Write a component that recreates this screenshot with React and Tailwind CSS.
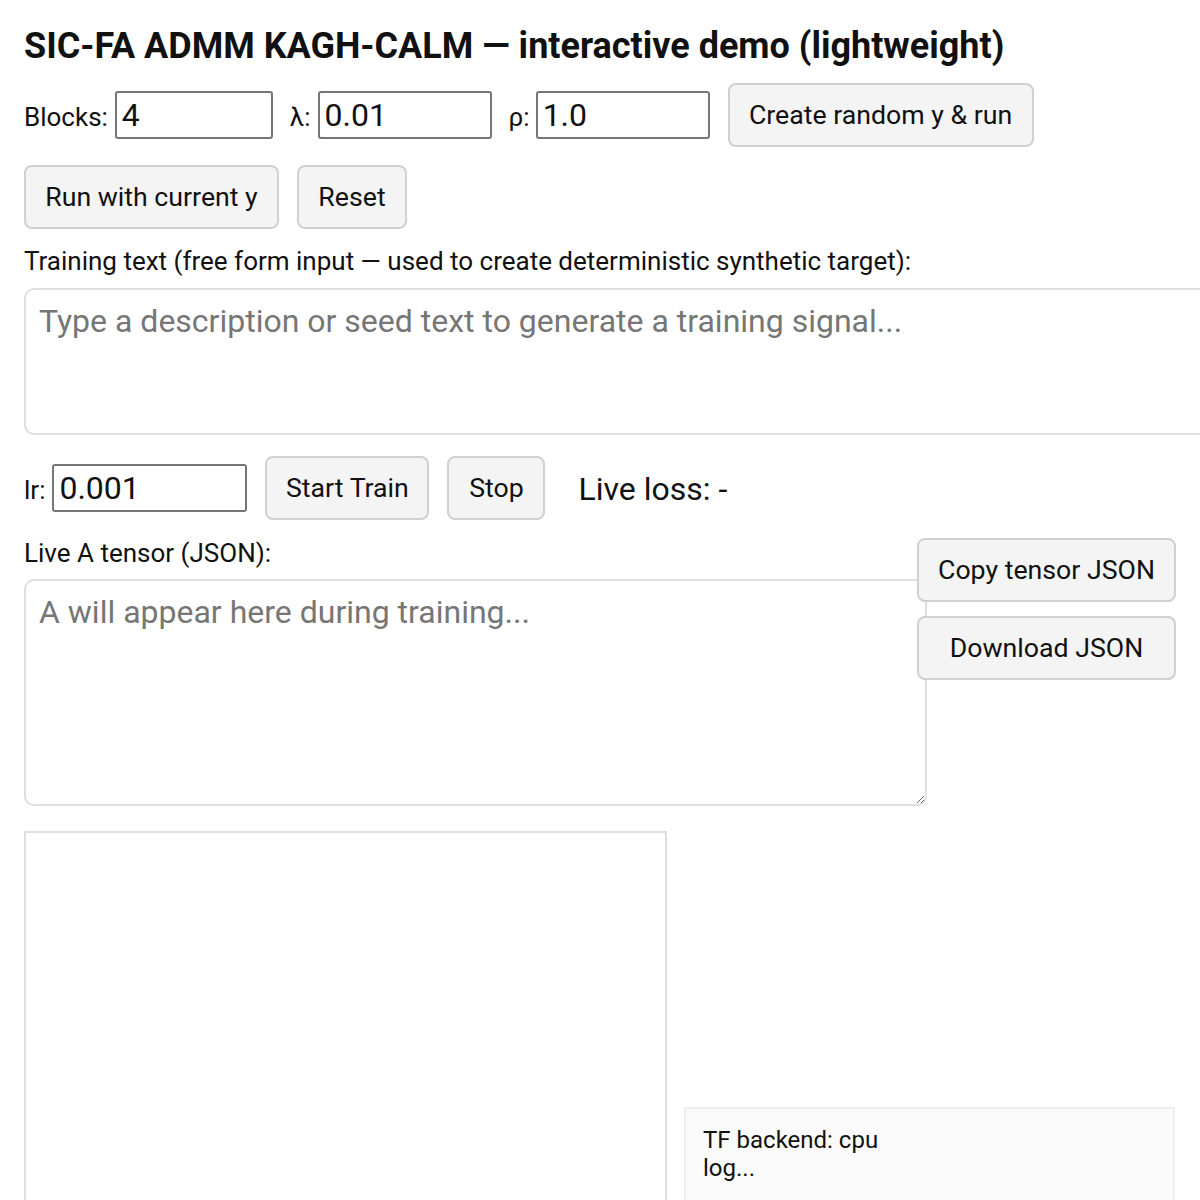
export default function App() {
  const btn =
    "h-[64px] rounded-[8px] border-2 border-[#d0d0d0] bg-[#f4f4f4] text-[26.7px] text-[#111] leading-none shrink-0 whitespace-nowrap";
  const inp =
    "h-[48px] border-2 border-[#767676] rounded-[3px] px-[5px] text-[32px] text-[#111] bg-white outline-none";
  const lbl = "pt-[4px]";
  return (
    <div className="min-h-[1200px] bg-white overflow-hidden font-['Roboto'] text-[#111]">
      <div className="pl-[24px] pt-[26px]">
        <h1 className="text-[36px] font-bold leading-[40px] text-[#111] whitespace-nowrap">
          SIC-FA ADMM KAGH-CALM — interactive demo (lightweight)
        </h1>

        <div className="flex items-center mt-[17px] h-[64px] text-[26px]">
          <span className={lbl}>Blocks:</span>
          <input className={`${inp} w-[158px] ml-[7px]`} defaultValue="4" />
          <span className={`${lbl} ml-[17px]`}>λ:</span>
          <input className={`${inp} w-[174px] ml-[7px]`} defaultValue="0.01" />
          <span className={`${lbl} ml-[17px]`}>ρ:</span>
          <input className={`${inp} w-[174px] ml-[6px]`} defaultValue="1.0" />
          <button className={`${btn} ml-[18px] w-[306px]`}>Create random y &amp; run</button>
        </div>

        <div className="flex items-center mt-[18px] gap-[18px]">
          <button className={`${btn} w-[255px]`}>Run with current y</button>
          <button className={`${btn} w-[110px]`}>Reset</button>
        </div>

        <div className="mt-[17px] text-[26px] leading-[30px]">
          Training text (free form input — used to create deterministic synthetic target):
        </div>
        <textarea
          className="mt-[12px] block w-[1200px] h-[147px] border-2 border-[#dedede] rounded-[10px] px-[13px] py-[13px] text-[32px] leading-[37px] placeholder-[#767676] outline-none resize-y"
          placeholder="Type a description or seed text to generate a training signal..."
        />

        <div className="flex items-center mt-[21px] h-[64px] text-[26px]">
          <span className={lbl}>lr:</span>
          <input className={`${inp} w-[195px] ml-[7px]`} defaultValue="0.001" />
          <button className={`${btn} ml-[18px] w-[164px]`}>Start Train</button>
          <button className={`${btn} ml-[18px] w-[98px]`}>Stop</button>
          <span className="ml-[33px] text-[32px] pt-[2px]">Live loss: -</span>
        </div>

        <div className="flex mt-[18px]">
          <div className="w-[903px] shrink-0">
            <div className="text-[26px] leading-[30px]">Live A tensor (JSON):</div>
            <textarea
              className="mt-[11px] block w-[903px] h-[227px] border-2 border-[#dedede] rounded-[10px] px-[13px] py-[13px] text-[32px] leading-[37px] placeholder-[#767676] outline-none resize-y"
              placeholder="A will appear here during training..."
            />
          </div>
          <div className="relative -ml-[10px] flex flex-col gap-[14px]">
            <button className={`${btn} w-[259px]`}>Copy tensor JSON</button>
            <button className={`${btn} w-[259px]`}>Download JSON</button>
          </div>
        </div>

        <div className="flex items-end mt-[25px] gap-[17px]">
          <div className="w-[643px] h-[380px] border-2 border-[#dedede] shrink-0" />
          <div className="w-[491px] h-[104px] bg-[#fafafa] border-2 border-[#eeeeee] px-[17px] pt-[17px] text-[24px] leading-[28px] text-[#111]">
            <div>TF backend: cpu</div>
            <div>log...</div>
          </div>
        </div>
      </div>
    </div>
  );
}
